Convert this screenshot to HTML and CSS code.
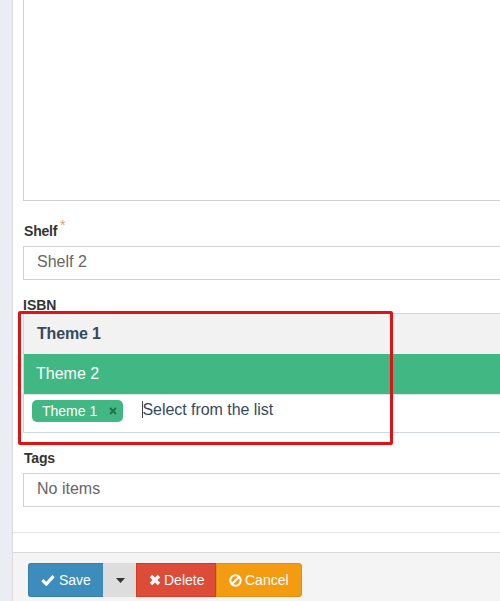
FILE: index.html
```html
<!DOCTYPE html>
<html lang="en">
<head>
<meta charset="utf-8">
<title>Edit book</title>
<link rel="stylesheet" href="styles.css">
</head>
<body>
<main class="panel">
  <form class="fields">
    <div class="textarea"></div>
    <label class="label shelf-label">Shelf <sup>*</sup></label>
    <div class="control">Shelf 2</div>
    <label class="label isbn-label">ISBN</label>
    <div class="multiselect">
      <div class="option selected">Theme 1</div>
      <div class="option active">Theme 2</div>
      <div class="tags">
        <span class="tag">Theme 1
          <svg width="8" height="8" viewBox="0 0 8 8"><path d="M1 1l6 6M7 1L1 7" stroke="#266d4d" stroke-width="1.8"/></svg>
        </span>
        <span class="search">Select from the list</span>
      </div>
      <div class="highlight"></div>
    </div>
    <label class="label tags-label">Tags</label>
    <div class="control">No items</div>
  </form>
  <footer class="footer">
    <div class="btn save">
      <svg width="14" height="12" viewBox="0 0 14 12"><path d="M1.3 6.2l4 3.9 7.3-8" fill="none" stroke="#fff" stroke-width="3.1"/></svg>
      <span>Save</span>
    </div>
    <div class="btn toggle"><svg width="9" height="5" viewBox="0 0 9 5"><path d="M0 0h9L4.5 5z" fill="#333"/></svg></div>
    <div class="btn delete">
      <svg width="12" height="12" viewBox="0 0 12 12"><path d="M2 2l8 8M10 2l-8 8" stroke="#fff" stroke-width="3.4"/></svg>
      <span>Delete</span>
    </div>
    <div class="btn cancel">
      <svg width="13" height="13" viewBox="0 0 13 13"><g fill="none" stroke="#fff" stroke-width="2"><circle cx="6.5" cy="6.5" r="5.2"/><path d="M2.8 10.2l7.4-7.4"/></g></svg>
      <span>Cancel</span>
    </div>
  </footer>
</main>
</body>
</html>
```
FILE: styles.css
```css
* { box-sizing: border-box; }

body {
  margin: 0;
  height: 601px;
  overflow: hidden;
  background: #eaedf4;
  font: 14px/20px "Liberation Sans", Arial, sans-serif;
  color: #333;
}

.panel {
  height: 601px;
  margin-left: 12px;
  border-left: 1px solid #d9dadd;
  background: #fff;
}

.fields {
  height: 533px;
  padding-left: 10px;
  border-bottom: 1px solid #e5e5e5;
}

.textarea {
  height: 201px;
  border: solid #d2d2d2;
  border-width: 0 0 1px 1px;
}

.label {
  display: block;
  height: 20px;
  padding-left: 1px;
  font-weight: bold;
  letter-spacing: -0.2px;
}

.shelf-label { margin: 20px 0 5px; }
.isbn-label { height: 18px; margin-top: 15px; padding-left: 0; letter-spacing: 0; }
.tags-label { margin: 15px 0 5px; }

.label sup {
  margin-left: -1px;
  font-size: 14px;
  font-weight: normal;
  line-height: 0;
  vertical-align: 6px;
  color: #e3a15f;
}

.control {
  height: 34px;
  padding: 0 13px;
  border: solid #d2d2d2;
  border-width: 1px 0 1px 1px;
  font-size: 16px;
  line-height: 29px;
  color: #666;
}

.multiselect {
  position: relative;
  height: 120px;
  border: solid #ccd6dc;
  border-width: 1px 0 1px 1px;
}

.option {
  height: 40px;
  padding-left: 12px;
  font-size: 16px;
  line-height: 39px;
}

.selected {
  padding-left: 13px;
  background: #f2f2f2;
  color: #35495e;
  font-weight: bold;
  letter-spacing: -0.15px;
}

.active {
  background: #41b883;
  color: #fff;
}

.tags {
  display: flex;
  align-items: flex-start;
  height: 38px;
  padding: 5px 0 0 8px;
  border-top: 1px solid #dce5e2;
}

.tag {
  display: flex;
  align-items: center;
  justify-content: space-between;
  width: 91px;
  height: 22px;
  padding: 0 6px 0 10px;
  border-radius: 5px;
  background: #41b883;
  color: #fff;
}

.search {
  height: 17px;
  margin: 1px 0 0 19px;
  border-left: 1px solid #444;
  font-size: 16px;
  line-height: 17px;
  letter-spacing: -0.05px;
  text-indent: -0.5px;
  color: #35495e;
}

.highlight {
  position: absolute;
  top: -3px;
  left: -6px;
  width: 375px;
  height: 134px;
  border: 3px solid #dc1414;
  border-radius: 2px;
}

.footer {
  display: flex;
  height: 49px;
  margin-top: 19px;
  padding: 10px 0 0 15px;
  border-top: 1px solid #d9d9d9;
  background: #f4f4f4;
}

.btn {
  display: flex;
  align-items: center;
  height: 34px;
  padding-left: 12px;
  border: 1px solid;
  color: #fff;
}

.btn span { margin-left: 3px; }

.save {
  width: 75px;
  border-color: #367fa9;
  border-right: 0;
  border-radius: 3px 0 0 3px;
  background: #3c8dbc;
}

.save span { margin-left: 4px; }

.toggle {
  width: 33px;
  border-color: #ddd;
  background: #ddd;
}

.delete {
  width: 80px;
  border-color: #d73925;
  background: #dd4b39;
}

.cancel {
  width: 86px;
  border-color: #e08e0b;
  border-radius: 0 3px 3px 0;
  background: #f39c12;
}
```
